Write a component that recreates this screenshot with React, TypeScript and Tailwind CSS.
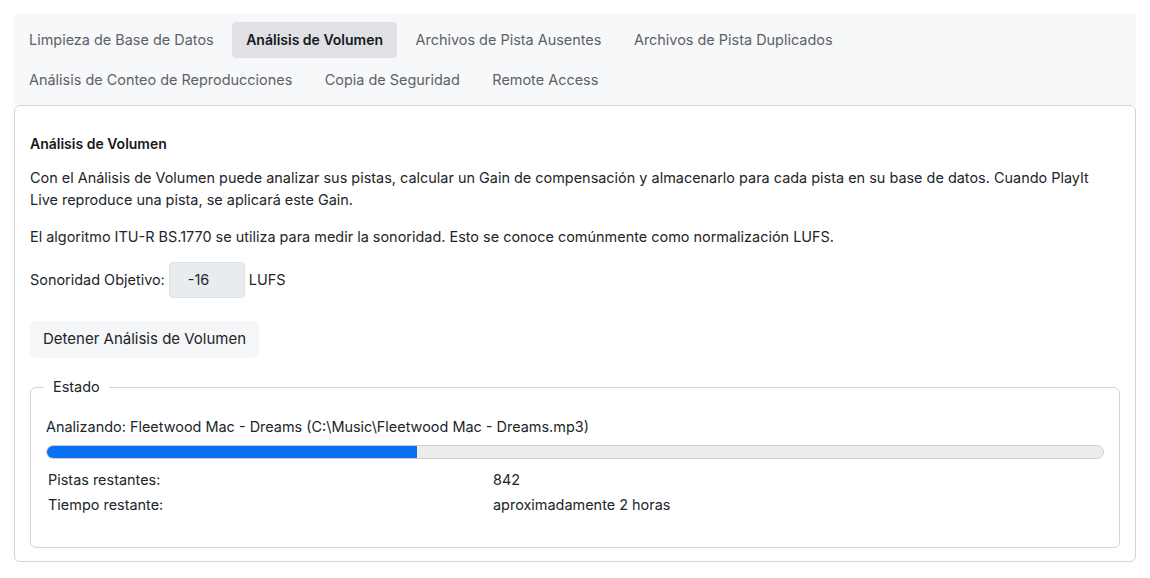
import { useState } from "react";

const tabs = [
  "Limpieza de Base de Datos",
  "Análisis de Volumen",
  "Archivos de Pista Ausentes",
  "Archivos de Pista Duplicados",
  "Análisis de Conteo de Reproducciones",
  "Copia de Seguridad",
  "Remote Access",
];

export default function App() {
  const [active, setActive] = useState("Análisis de Volumen");
  const progress = 35;

  return (
    <div className="min-h-[578px] bg-white p-[14px] text-[#212529]" style={{ fontFamily: "Inter, 'Noto Sans', sans-serif" }}>
      {/* Tabs */}
      <div className="bg-[#f7f8fa] px-px pt-[8px] pb-[7px]">
        <div className="flex flex-wrap gap-x-[4.5px] gap-y-[4px]">
          {tabs.map((t) => (
            <button
              key={t}
              onClick={() => setActive(t)}
              className={`h-[36px] rounded-[4px] px-[14px] leading-[20px] ${
                active === t ? "bg-[#dfe1e4] text-[14px] font-semibold text-[#16181b]" : "text-[14.45px] text-[#5c6168]"
              }`}
            >
              {t}
            </button>
          ))}
        </div>
      </div>

      {/* Card */}
      <div className="rounded-[6px] border border-[#d4d4d4] px-[15px] pt-[28px] pb-[13px] text-[14.45px]">
        <h2 className="text-[14px] font-semibold leading-[20px] text-[#16181b]">Análisis de Volumen</h2>
        <p className="mt-[13px] leading-[22px]">
          Con el Análisis de Volumen puede analizar sus pistas, calcular un Gain de compensación y almacenarlo para cada pista en su base de datos. Cuando PlayIt Live reproduce una pista, se aplicará este Gain.
        </p>
        <p className="mt-[15px] leading-[22px]">
          El algoritmo ITU-R BS.1770 se utiliza para medir la sonoridad. Esto se conoce comúnmente como normalización LUFS.
        </p>

        <div className="mt-[14px] flex items-center">
          <span>Sonoridad Objetivo:</span>
          <div className="ml-[4px] flex h-[36px] w-[76px] items-center rounded-[4px] border border-[#dcdfe3] bg-[#e9ecef] pl-[18px]">
            -16
          </div>
          <span className="ml-[4px]">LUFS</span>
        </div>

        <button className="mt-[23px] h-[37px] rounded-[6px] bg-[#f5f6f8] px-[13px] text-[15px] text-[#212529]">
          Detener Análisis de Volumen
        </button>

        <fieldset className="mt-[19px] rounded-[6px] border border-[#d4d4d4] px-[15px] pb-[30px]">
          <legend className="ml-[-2px] px-[9px] leading-[20px]">Estado</legend>
          <div className="mt-[20px] leading-[20px]">
            Analizando: Fleetwood Mac - Dreams (C:\Music\Fleetwood Mac - Dreams.mp3)
          </div>
          <div className="mt-[8px] h-[14px] overflow-hidden rounded-full border border-[#cfcfcf] bg-[#ececec]">
            <div className="h-full bg-[#0a72f2]" style={{ width: `${progress}%` }} />
          </div>
          <div className="mt-[8px] grid grid-cols-[445px_1fr] pl-[2px] leading-[25px]">
            <span>Pistas restantes:</span>
            <span>842</span>
            <span>Tiempo restante:</span>
            <span>aproximadamente 2 horas</span>
          </div>
        </fieldset>
      </div>
    </div>
  );
}
